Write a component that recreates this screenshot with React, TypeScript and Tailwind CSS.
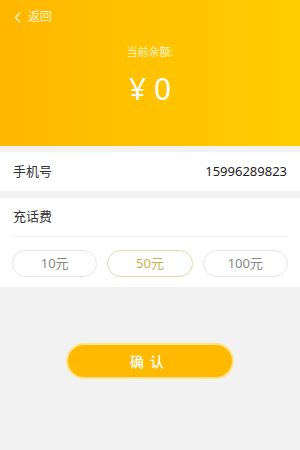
import { ChevronLeft } from "lucide-react";

const AMOUNTS = [
  { label: "10元", active: false },
  { label: "50元", active: true },
  { label: "100元", active: false },
];

export default function App() {
  return (
    <div
      className="min-h-[450px] w-[300px] bg-[#f2f2f2] text-[#333]"
      style={{ fontFamily: '"Noto Sans", "Noto Sans CJK SC", sans-serif' }}
    >
      <header className="h-[146px] bg-gradient-to-r from-[#ffb700] to-[#ffcd00] text-white">
        <div className="flex items-center gap-[2px] px-[9px] pt-[8px] text-[12px] text-[#fff6d9]">
          <ChevronLeft size={17} strokeWidth={1.8} />
          <span>返回</span>
        </div>
        <div className="mt-[18px] text-center text-[11px] text-[#fff4c8]">当前余额:</div>
        <div className="mt-[8px] text-center text-[30px] leading-[40px] font-normal">¥ 0</div>
      </header>

      <div className="mt-[6px] flex h-[39px] items-center justify-between bg-white px-[13px] text-[13px]">
        <span>手机号</span>
        <span className="text-[#222]">15996289823</span>
      </div>

      <section className="mt-[7px] bg-white px-[12px] pb-[10px]">
        <div className="flex h-[39px] items-center border-b border-[#f3f3f3] px-[1px] text-[13px]">充话费</div>
        <div className="mt-[13px] grid grid-cols-3 gap-[10px]">
          {AMOUNTS.map((a) => (
            <div
              key={a.label}
              className={`flex h-[27px] items-center justify-center rounded-full border text-[13px] ${
                a.active ? "border-[#e0d9a8] text-[#c8b24a]" : "border-[#e6e6e6] text-[#888]"
              }`}
            >
              {a.label}
            </div>
          ))}
        </div>
      </section>

      <div className="mt-[56px] flex justify-center">
        <button
          type="button"
          className="h-[36px] w-[168px] rounded-full border-2 border-[#ffe58a] bg-[#ffb900] text-[14px] font-medium tracking-[6px] text-white"
        >
          确认
        </button>
      </div>
    </div>
  );
}
